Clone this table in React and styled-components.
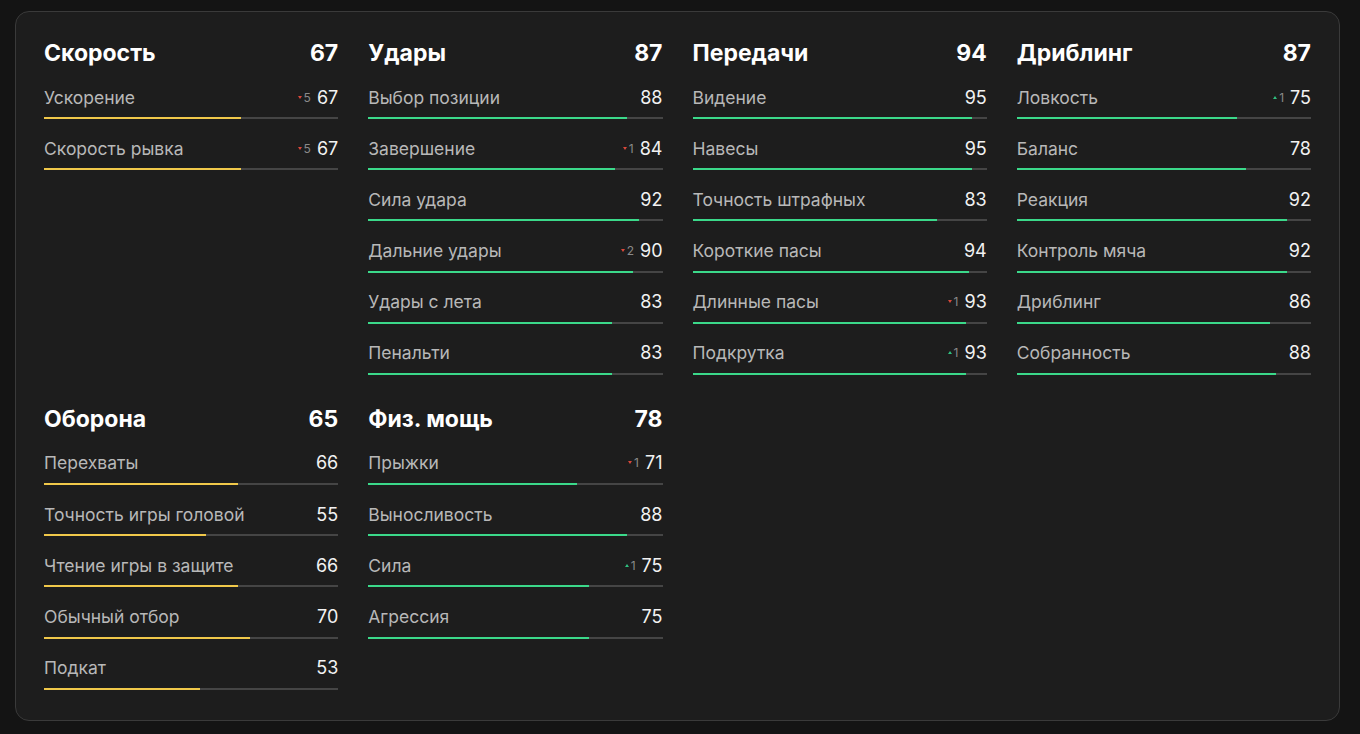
import React from "react";
import styled, { createGlobalStyle } from "styled-components";

const GlobalStyle = createGlobalStyle`
	html, body {
		margin: 0;
		background: #141414;
		font-family: Inter, "Noto Sans", Roboto, sans-serif;
	}
`;

const Page = styled.div`
	padding: 11px 20px 15px 15px;
`;

const Card = styled.div`
	background: #1d1d1d;
	border: 1px solid #3a3a3a;
	border-radius: 14px;
	padding: 27px 28px 30px 28px;
	display: grid;
	grid-template-columns: repeat(4, 1fr);
	column-gap: 30px;
	row-gap: 30px;
	align-items: start;
`;

const Section = styled.section`
	display: flex;
	flex-direction: column;
`;

const Heading = styled.div`
	display: flex;
	justify-content: space-between;
	align-items: center;
	height: 28px;
	margin-bottom: 18px;
	color: #fff;
	font-size: 23px;
	font-weight: 700;
`;

const Row = styled.div`
	display: flex;
	flex-direction: column;
	& + & {
		margin-top: 17.2px;
	}
`;

const RowTop = styled.div`
	display: flex;
	align-items: center;
	height: 24px;
	margin-bottom: 8px;
`;

const Label = styled.span`
	flex: 1;
	color: #b8b8b8;
	font-size: 17.5px;
`;

const Delta = styled.span`
	display: flex;
	align-items: center;
	margin-right: 6px;
	color: #8a8a8a;
	font-size: 12px;
`;

const Arrow = styled.span`
	width: 0;
	height: 0;
	margin-right: 2px;
	border-left: 2px solid transparent;
	border-right: 2px solid transparent;
	${({ $up }) =>
		$up
			? "border-bottom: 3px solid #2fbf7f;"
			: "border-top: 3px solid #d9483b;"}
`;

const Value = styled.span`
	color: #f2f2f2;
	font-size: 18px;
`;

const Track = styled.div`
	height: 2px;
	background: #454545;
`;

const Fill = styled.div`
	height: 100%;
	background: ${({ $high }) => ($high ? "#3bd98a" : "#f0c84a")};
`;

const sections = [
	{
		title: "Скорость",
		value: 67,
		rows: [
			["Ускорение", 67, -5],
			["Скорость рывка", 67, -5],
		],
	},
	{
		title: "Удары",
		value: 87,
		rows: [
			["Выбор позиции", 88],
			["Завершение", 84, -1],
			["Сила удара", 92],
			["Дальние удары", 90, -2],
			["Удары с лета", 83],
			["Пенальти", 83],
		],
	},
	{
		title: "Передачи",
		value: 94,
		rows: [
			["Видение", 95],
			["Навесы", 95],
			["Точность штрафных", 83],
			["Короткие пасы", 94],
			["Длинные пасы", 93, -1],
			["Подкрутка", 93, 1],
		],
	},
	{
		title: "Дриблинг",
		value: 87,
		rows: [
			["Ловкость", 75, 1],
			["Баланс", 78],
			["Реакция", 92],
			["Контроль мяча", 92],
			["Дриблинг", 86],
			["Собранность", 88],
		],
	},
	{
		title: "Оборона",
		value: 65,
		rows: [
			["Перехваты", 66],
			["Точность игры головой", 55],
			["Чтение игры в защите", 66],
			["Обычный отбор", 70],
			["Подкат", 53],
		],
	},
	{
		title: "Физ. мощь",
		value: 78,
		rows: [
			["Прыжки", 71, -1],
			["Выносливость", 88],
			["Сила", 75, 1],
			["Агрессия", 75],
		],
	},
];

function StatRow({ label, value, delta }) {
	return (
		<Row>
			<RowTop>
				<Label>{label}</Label>
				{delta ? (
					<Delta>
						<Arrow $up={delta > 0} />
						{Math.abs(delta)}
					</Delta>
				) : null}
				<Value>{value}</Value>
			</RowTop>
			<Track>
				<Fill $high={value > 70} style={{ width: `${value}%` }} />
			</Track>
		</Row>
	);
}

export default function App() {
	return (
		<Page>
			<GlobalStyle />
			<Card>
				{sections.map((s) => (
					<Section key={s.title}>
						<Heading>
							<span>{s.title}</span>
							<span>{s.value}</span>
						</Heading>
						{s.rows.map(([label, value, delta]) => (
							<StatRow key={label} label={label} value={value} delta={delta} />
						))}
					</Section>
				))}
			</Card>
		</Page>
	);
}
